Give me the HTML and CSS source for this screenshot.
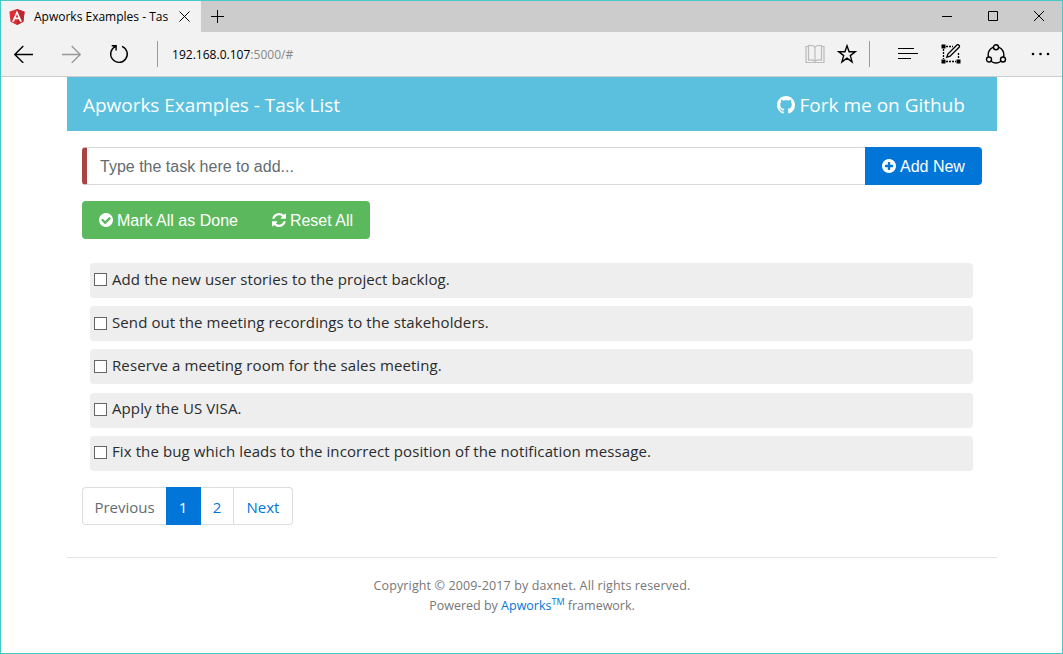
FILE: index.html
```html
<!DOCTYPE html>
<html lang="en">
<head>
<meta charset="utf-8">
<title>Apworks Examples - Task List</title>
<link rel="stylesheet" href="styles.css">
</head>
<body>
<div class="window">
  <header class="titlebar">
    <div class="tab">
      <svg class="tab-logo" width="16" height="16" viewBox="0 0 16 16"><path fill="#dd2c35" d="M8 0l7.600 2.700-1.200 10L8 16l-6.400-3.300L.4 2.700z"/><path fill="#b9292f" d="M8 0l7.600 2.700-1.200 10L8 16z"/><path fill="#fff" fill-rule="evenodd" d="M8 1.500l5 11.200h-2l-1-2.400H6l-1 2.400H3zM8 5L6.700 8.600h2.600z"/></svg>
      <span class="tab-title">Apworks Examples - Tas</span>
      <svg class="tab-close" width="11" height="11" viewBox="0 0 11 11"><path d="M.5.500l10 10M10.500.500l-10 10"/></svg>
    </div>
    <svg class="new-tab" width="13" height="13" viewBox="0 0 13 13"><path d="M6.500 0v13M0 6.500h13"/></svg>
    <div class="controls">
      <svg width="12" height="12" viewBox="0 0 12 12"><path d="M1 6.500h10"/></svg>
      <svg width="12" height="12" viewBox="0 0 12 12"><path d="M1.500 1.500h9v9h-9z"/></svg>
      <svg width="12" height="12" viewBox="0 0 12 12"><path d="M1 1l10 10M11 1L1 11"/></svg>
    </div>
  </header>
  <nav class="toolbar">
    <svg class="back" width="20" height="18" viewBox="0 0 20 18"><path d="M.8 9.500H19M9.300 1.100L.8 9.500l8.500 8.400"/></svg>
    <svg class="forward" width="20" height="18" viewBox="0 0 20 18"><path d="M0 9.500h18.200M9.700 1.100l8.500 8.400-8.500 8.400"/></svg>
    <svg class="reload" width="20" height="20" viewBox="0 0 20 20"><path d="M13 2.300a8.300 8.300 0 1 1-6.300.1M2.700 1.700h4.400v4.700"/></svg>
    <span class="rule"></span>
    <span class="address">192.168.0.107<span class="port">:5000/#</span></span>
    <div class="tools">
      <svg class="book" width="20" height="20" viewBox="0 0 20 20"><path d="M3 2.500H1v16h18v-16h-2M10 3C8 1.500 6 1.200 3.500 1.500v14.700C6 15.700 8 15.700 10 17.200c2-1.500 4-1.500 6.500-1V1.500C14 1.200 12 1.500 10 3zM10 3v14"/></svg>
      <svg class="star" width="20" height="20" viewBox="0 0 20 20"><path d="M10 1.800l2.100 6h6.100l-4.900 3.800 1.800 6.300-5.100-3.700-5.100 3.700 1.800-6.300L1.800 7.800h6.100z"/></svg>
      <span class="rule"></span>
      <svg class="hub" width="20" height="12" viewBox="0 0 20 12"><path d="M0 .5h16M0 5.500h20M0 10.500h13"/></svg>
      <svg class="note" width="20" height="20" viewBox="0 0 20 20"><path d="M5 2.500h7M2.500 5v10M17.500 9v6M5 17.500h10" stroke-dasharray="2 1"/><path class="solid" d="M.5.500h4v4h-4zM.500 15.500h4v4h-4zM15.500 15.500h4v4h-4z"/><path class="pen" d="M5.800 13.300l1.100-3.300 9-9c1.200-1.100 3.400.9 2.200 2.200l-9 9z"/></svg>
      <svg class="share" width="22" height="20" viewBox="0 0 22 20"><path d="M8.300 3.100A8.200 8.200 0 0 0 3.500 13M13.700 3.100A8.200 8.200 0 0 1 18.500 13M6.100 17.200a8.500 8.500 0 0 0 9.800 0"/><circle cx="11" cy="3.200" r="2.500"/><circle cx="4" cy="15.500" r="2.500"/><circle cx="18" cy="15.500" r="2.500"/></svg>
      <svg class="more" width="20" height="4" viewBox="0 0 20 4"><circle cx="2" cy="2" r="1.300"/><circle cx="9.500" cy="2" r="1.300"/><circle cx="17" cy="2" r="1.300"/></svg>
    </div>
  </nav>
  <main class="page">
    <div class="banner">
      <span class="brand">Apworks Examples - Task List</span>
      <a class="fork"><svg width="18" height="18" viewBox="0 0 16 16"><path d="M8 0C3.580 0 0 3.580 0 8c0 3.540 2.290 6.530 5.470 7.590.4.070.55-.17.55-.38 0-.19-.01-.82-.01-1.490-2.010.37-2.530-.49-2.690-.94-.09-.23-.48-.94-.82-1.130-.28-.15-.68-.52-.01-.53.63-.01 1.080.58 1.230.82.72 1.210 1.870.87 2.330.66.070-.52.28-.87.51-1.070-1.780-.2-3.640-.89-3.640-3.950 0-.87.31-1.590.82-2.150-.08-.2-.36-1.020.08-2.120 0 0 .67-.21 2.200.82.64-.18 1.320-.27 2-.27s1.360.09 2 .27c1.530-1.040 2.200-.82 2.200-.82.44 1.100.16 1.920.08 2.120.51.56.82 1.270.82 2.150 0 3.070-1.870 3.750-3.650 3.950.29.25.54.73.54 1.480 0 1.070-.01 1.930-.01 2.200 0 .21.15.46.55.38A8.010 8.010 0 0 0 16 8c0-4.420-3.580-8-8-8z"/></svg><span>Fork me on Github</span></a>
    </div>
    <div class="content">
      <div class="add-row">
        <input class="task-input" type="text" placeholder="Type the task here to add...">
        <button class="btn primary"><svg width="14" height="14" viewBox="128 128 1536 1536"><path d="M1344 960v-128q0-26-19-45t-45-19h-256v-256q0-26-19-45t-45-19h-128q-26 0-45 19t-19 45v256h-256q-26 0-45 19t-19 45v128q0 26 19 45t45 19h256v256q0 26 19 45t45 19h128q26 0 45-19t19-45v-256h256q26 0 45-19t19-45zm320-64q0 209-103 385.500t-279.500 279.500-385.500 103-385.500-103-279.500-279.500-103-385.500 103-385.500 279.500-279.500 385.500-103 385.500 103 279.500 279.500 103 385.500z"/></svg><span>Add New</span></button>
      </div>
      <div class="bulk">
        <button class="btn"><svg width="14" height="14" viewBox="128 128 1536 1536"><path d="M1412 734q0-28-18-46l-91-90q-19-19-45-19t-45 19l-408 407-226-226q-19-19-45-19t-45 19l-91 90q-18 18-18 46 0 27 18 45l362 362q19 19 45 19 27 0 46-19l543-543q18-18 18-45zm252 162q0 209-103 385.500t-279.500 279.500-385.500 103-385.500-103-279.500-279.500-103-385.500 103-385.500 279.500-279.500 385.500-103 385.500 103 279.500 279.500 103 385.500z"/></svg><span>Mark All as Done</span></button>
        <button class="btn"><svg width="14" height="14" viewBox="128 128 1536 1536"><path d="M1639 1056q0 5-1 7-64 268-268 434.500t-478 166.500q-146 0-282.500-55t-243.500-157l-129 129q-19 19-45 19t-45-19-19-45v-448q0-26 19-45t45-19h448q26 0 45 19t19 45-19 45l-137 137q71 66 161 102t187 36q134 0 250-65t186-179q11-17 53-117 8-23 30-23h192q13 0 22.500 9.500t9.500 22.500zm25-800v448q0 26-19 45t-45 19h-448q-26 0-45-19t-19-45 19-45l138-138q-148-137-349-137-134 0-250 65t-186 179q-11 17-53 117-8 23-30 23h-199q-13 0-22.500-9.500t-9.500-22.500v-7q65-268 270-434.500t480-166.500q146 0 284 55.500t245 156.500l130-129q19-19 45-19t45 19 19 45z"/></svg><span>Reset All</span></button>
      </div>
      <ul class="tasks">
        <li><label><input type="checkbox"><span>Add the new user stories to the project backlog.</span></label></li>
        <li><label><input type="checkbox"><span>Send out the meeting recordings to the stakeholders.</span></label></li>
        <li><label><input type="checkbox"><span>Reserve a meeting room for the sales meeting.</span></label></li>
        <li><label><input type="checkbox"><span>Apply the US VISA.</span></label></li>
        <li><label><input type="checkbox"><span>Fix the bug which leads to the incorrect position of the notification message.</span></label></li>
      </ul>
      <div class="pager">
        <a class="prev">Previous</a><a class="current">1</a><a class="second">2</a><a class="next">Next</a>
      </div>
    </div>
    <footer class="footer">
      <p class="copyright">Copyright © 2009-2017 by daxnet. All rights reserved.</p>
      <p>Powered by <a>Apworks<sup>TM</sup></a> framework.</p>
    </footer>
  </main>
</div>
</body>
</html>
```

FILE: styles.css
```css
* { box-sizing: border-box; }
body {
  margin: 0;
  font-family: "Open Sans", "Noto Sans", sans-serif;
  color: #292b2c;
  background: #fff;
}
svg { flex: none; display: block; }
.window {
  width: 1063px;
  height: 654px;
  border: 1px solid #45c8c8;
  overflow: hidden;
}

/* Browser chrome */
.titlebar { display: flex; height: 31px; background: #ccc; }
.titlebar svg { fill: none; stroke: #000; stroke-width: 1; }
.tab {
  display: flex;
  align-items: center;
  width: 200px;
  padding: 0 11px 0 8px;
  background: #f2f2f2;
}
.tab .tab-logo { stroke: none; }
.tab-title {
  margin-left: 9px;
  white-space: nowrap;
  font-size: 12px;
  line-height: 20px;
  color: #000;
}
.tab-close { margin-left: auto; }
.titlebar .new-tab { margin: 9px 0 0 10px; }
.controls { display: flex; gap: 34px; margin: 9px 17px 0 auto; }
.toolbar {
  display: flex;
  align-items: center;
  height: 45px;
  background: #f2f2f2;
  border-bottom: 1px solid #ccc;
}
.toolbar svg { fill: none; stroke: #000; stroke-width: 1.4; }
.back { margin-left: 13px; }
.toolbar .forward { margin-left: 28px; stroke: #999; }
.reload { margin-left: 27px; }
.rule { width: 1px; height: 26px; background: #999; }
.reload + .rule { margin-left: 28px; }
.address { margin-left: 14px; font-size: 12px; letter-spacing: 0.02px; color: #000; }
.port { color: #888; }
.tools { display: flex; align-items: center; margin: 0 11px 0 auto; }
.toolbar .book { stroke: #bbb; stroke-width: 1.2; }
.star { margin-left: 12px; }
.tools .rule { margin-left: 12px; }
.hub { margin-left: 28px; }
.toolbar .hub { stroke-width: 1; }
.note { margin-left: 23px; }
.toolbar .solid { fill: #000; stroke: none; }
.note .pen { fill: #f2f2f2; }
.note path { stroke-width: 1.3; }
.share { margin-left: 24px; }
.toolbar .more { margin-left: 24px; fill: #000; stroke: none; }

/* Page */
.page { width: 930px; margin-left: 66px; }
.banner {
  display: flex;
  justify-content: space-between;
  align-items: center;
  height: 54px;
  padding: 1px 32px 0 16px;
  background: #5bc0de;
  color: #fff;
  font-size: 19px;
  white-space: nowrap;
}
.brand { letter-spacing: -0.03px; }
.fork { display: flex; align-items: center; gap: 5px; }
.fork svg { fill: #fff; }
.content { padding: 16px 15px 0; }
.add-row { display: flex; height: 38px; }
.task-input {
  flex: 1;
  min-width: 0;
  padding: 2px 13px 0;
  border: 1px solid #d9d9d9;
  border-left: 5px solid #a94442;
  border-right: 0;
  border-radius: 4px 0 0 4px;
  font: 16px "Liberation Sans", Arial, sans-serif;
}
.task-input::placeholder { color: #636c72; opacity: 1; }
.btn {
  display: flex;
  align-items: center;
  gap: 4px;
  height: 38px;
  padding: 0 16px 0 17px;
  border: 0;
  background: #5cb85c;
  color: #fff;
  font: 16px "Liberation Sans", Arial, sans-serif;
  white-space: nowrap;
}
.btn svg { fill: #fff; }
.btn span { padding-top: 2px; }
.primary { width: 117px; background: #0275d8; border-radius: 0 4px 4px 0; }
.bulk {
  display: flex;
  width: 288px;
  margin-top: 16px;
  border-radius: 4px;
  overflow: hidden;
}
.bulk .btn { flex: auto; }
.tasks {
  list-style: none;
  display: grid;
  gap: 8.200px;
  margin: 24px 9px 0 8px;
  padding: 0;
}
.tasks li { height: 35px; padding: 0 4px; background: #eee; border-radius: 4px; }
.tasks label {
  display: flex;
  align-items: center;
  height: 31.400px;
  font-size: 15px;
  letter-spacing: 0.1px;
  white-space: nowrap;
}
.tasks input {
  appearance: none;
  width: 13px;
  height: 13px;
  margin: 2.600px 5px 0 0;
  border: 1px solid #666;
  background: #fff;
}
.pager { display: flex; width: 211px; height: 38px; margin-top: 16px; font-size: 15px; }
.pager a {
  display: flex;
  align-items: center;
  justify-content: center;
  padding-top: 2px;
  border: 1px solid #ddd;
  border-left: 0;
  color: #0275d8;
}
.pager .prev { width: 84px; border-left: 1px solid #ddd; border-right: 0; border-radius: 4px 0 0 4px; color: #636c72; }
.pager .current { width: 35px; background: #0275d8; border-color: #0275d8; color: #fff; }
.pager .second { width: 33px; }
.pager .next { width: 59px; border-radius: 0 4px 4px 0; }
.footer {
  margin-top: 32px;
  padding-top: 18px;
  border-top: 1px solid #e5e5e5;
  color: #777;
  font-size: 12.500px;
  line-height: 20px;
  text-align: center;
}
.footer p { margin: 0; }
.copyright { letter-spacing: 0.13px; }
.footer a { color: #0275d8; }
.footer sup { font-size: 9px; line-height: 0; }
```
